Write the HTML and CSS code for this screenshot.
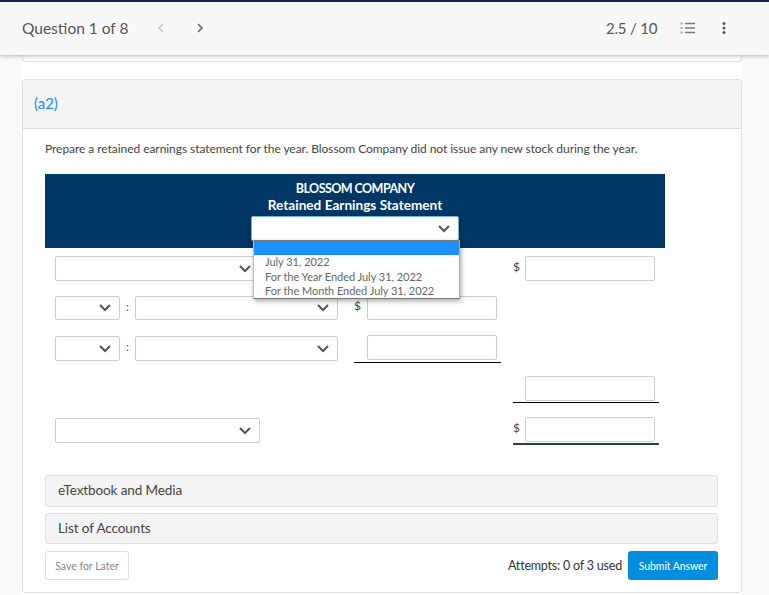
FILE: index.html
```html
<!DOCTYPE html>
<html lang="en">
<head>
<meta charset="utf-8">
<title>Question 1 of 8</title>
<link rel="stylesheet" href="styles.css">
</head>
<body>
<header class="topbar">
  <div class="topbar-left">
    <span class="q-title">Question 1 of 8</span>
    <svg class="nav-icon prev" width="8" height="10" viewBox="0 0 8 10"><path d="M6 1 2 5l4 4" fill="none" stroke="#c4c4c4" stroke-width="1.6"/></svg>
    <svg class="nav-icon next" width="8" height="10" viewBox="0 0 8 10"><path d="M2 1l4 4-4 4" fill="none" stroke="#666" stroke-width="1.6"/></svg>
  </div>
  <div class="topbar-right">
    <span class="score">2.5 / 10</span>
    <svg class="list-icon" width="15" height="12" viewBox="0 0 15 12"><path d="M5 1.5h10M5 6h10M5 10.5h10" stroke="#777" stroke-width="1.3"/><path d="M0.5 0.5h2v2h-2zM0.5 5h2v2h-2zM0.5 9.5h2v2h-2z" fill="#aaa"/></svg>
    <svg class="more-icon" width="4" height="12" viewBox="0 0 4 12"><circle cx="2" cy="1.5" r="1.5" fill="#555"/><circle cx="2" cy="6" r="1.5" fill="#555"/><circle cx="2" cy="10.5" r="1.5" fill="#555"/></svg>
  </div>
</header>
<main class="page">
  <div class="prev-panel"></div>
  <section class="panel">
    <div class="panel-head">(a2)</div>
    <div class="panel-body">
      <p class="prompt">Prepare a retained earnings statement for the year. Blossom Company did not issue any new stock during the year.</p>
      <div class="statement">
        <div class="banner">
          <div class="co">BLOSSOM COMPANY</div>
          <div class="st">Retained Earnings Statement</div>
          <div class="sel sel-date"><svg class="chev" width="12" height="8" viewBox="0 0 12 8"><path d="M1 1l5 5 5-5" fill="none" stroke="#555" stroke-width="2"/></svg></div>
          <ul class="menu">
            <li class="menu-blank"></li>
            <li>July 31, 2022</li>
            <li>For the Year Ended July 31, 2022</li>
            <li>For the Month Ended July 31, 2022</li>
          </ul>
        </div>
        <div class="row row-1">
          <div class="sel sel-wide"><svg class="chev" width="12" height="8" viewBox="0 0 12 8"><path d="M1 1l5 5 5-5" fill="none" stroke="#555" stroke-width="2"/></svg></div>
          <div class="cell-b"></div>
          <div class="cell-c"><span class="dollar">$</span><div class="inp"></div></div>
        </div>
        <div class="row row-2">
          <div class="cell-a">
            <div class="sel sel-small"><svg class="chev" width="12" height="8" viewBox="0 0 12 8"><path d="M1 1l5 5 5-5" fill="none" stroke="#555" stroke-width="2"/></svg></div>
            <span class="colon">:</span>
            <div class="sel sel-mid"><svg class="chev" width="12" height="8" viewBox="0 0 12 8"><path d="M1 1l5 5 5-5" fill="none" stroke="#555" stroke-width="2"/></svg></div>
          </div>
          <div class="cell-b"><span class="dollar">$</span><div class="inp"></div></div>
          <div class="cell-c"></div>
        </div>
        <div class="row row-3">
          <div class="cell-a">
            <div class="sel sel-small"><svg class="chev" width="12" height="8" viewBox="0 0 12 8"><path d="M1 1l5 5 5-5" fill="none" stroke="#555" stroke-width="2"/></svg></div>
            <span class="colon">:</span>
            <div class="sel sel-mid"><svg class="chev" width="12" height="8" viewBox="0 0 12 8"><path d="M1 1l5 5 5-5" fill="none" stroke="#555" stroke-width="2"/></svg></div>
          </div>
          <div class="cell-b line"><span class="dollar"></span><div class="inp"></div></div>
          <div class="cell-c"></div>
        </div>
        <div class="row row-4">
          <div class="cell-a"></div>
          <div class="cell-b"></div>
          <div class="cell-c line"><span class="dollar"></span><div class="inp"></div></div>
        </div>
        <div class="row row-5">
          <div class="sel sel-wide"><svg class="chev" width="12" height="8" viewBox="0 0 12 8"><path d="M1 1l5 5 5-5" fill="none" stroke="#555" stroke-width="2"/></svg></div>
          <div class="cell-b"></div>
          <div class="cell-c double"><span class="dollar">$</span><div class="inp"></div></div>
        </div>
      </div>
      <div class="accordion">eTextbook and Media</div>
      <div class="accordion second">List of Accounts</div>
      <div class="actions">
        <button class="save">Save for Later</button>
        <div class="submit-wrap">
          <span class="attempts">Attempts: 0 of 3 used</span>
          <button class="submit">Submit Answer</button>
        </div>
      </div>
    </div>
  </section>
</main>
</body>
</html>
```
FILE: styles.css
```css
* { box-sizing: border-box; }
html, body { margin: 0; padding: 0; height: 595px; overflow: hidden; }
body { background: #fafafa; font-family: Lato, "Open Sans", sans-serif; color: #444; }

.topbar {
  position: absolute; top: 0; left: 0; right: 0; height: 55px; z-index: 5;
  display: flex; align-items: center; justify-content: space-between;
  background: #f8f8f8; border-top: 2px solid #14204a;
  box-shadow: 0 1px 4px rgba(0,0,0,.3);
  padding: 0 43px 2px 22px;
}
.topbar-left, .topbar-right { display: flex; align-items: center; }
.q-title { font-size: 15.5px; color: #555; width: 135px; }
.nav-icon.next { margin-left: 31px; }
.score { font-size: 15px; letter-spacing: -.2px; color: #555; white-space: nowrap; width: 52px; }
.list-icon { margin-left: 22px; }
.more-icon { margin-left: 27px; }

.page { width: 720px; margin-left: 22px; background: #fff; height: 595px; padding-top: 55px; }
.prev-panel { height: 7px; border: 1px solid #e0e0e0; border-top: 0; border-radius: 0 0 3px 3px; }
.panel { margin-top: 17px; height: 514px; border: 1px solid #e0e0e0; border-radius: 3px; }
.panel-head { height: 49px; background: #f4f4f4; border-bottom: 1px solid #ddd; padding: 13px 11px; font-size: 15px; line-height: 20px; color: #1a8fe0; }
.panel-body { padding: 0 23px 0 22px; }
.prompt { margin: 0; padding-top: 12px; height: 45px; font-size: 12px; letter-spacing: -.055px; line-height: 16px; color: #444; white-space: nowrap; }

.statement { width: 620px; height: 301px; margin-bottom: 0; }
.banner { position: relative; height: 74px; background: #003764; color: #fff; text-align: center; padding-top: 6px; font-weight: 700; line-height: 17px; }
.co { font-size: 12.5px; letter-spacing: -.55px; }
.st { font-size: 13.6px; }
.sel-date { position: absolute; left: 206px; top: 42px; width: 208px; height: 25px; border-color: #6db3e8 !important; box-shadow: 0 2px 6px rgba(0,0,0,.3); }
.menu { position: absolute; left: 208px; top: 66px; width: 207px; height: 59px; margin: 0; padding: 0; list-style: none; background: #fff; z-index: 3; border-top: 1px solid #777; border-bottom: 1px solid #777; border-right: 1px solid #aaa; border-left: 1px solid #bbb; box-shadow: 1px 2px 5px rgba(0,0,0,.35); text-align: left; font-weight: 400; font-size: 11px; letter-spacing: -.04px; line-height: 14.6px; color: #666; white-space: nowrap; }
.menu li { padding-left: 11px; height: 14.6px; }
.menu .menu-blank { background: #1e90ff; height: 14px; }

.sel { display: flex; align-items: center; justify-content: flex-end; background: #fff; border: 1px solid #ccc; border-radius: 2px; height: 25px; padding-right: 8px; flex: none; }
.sel-wide { width: 205px; margin-left: 10px; }
.sel-small { width: 65px; }
.sel-mid { width: 203px; }
.colon { width: 15px; text-align: center; font-size: 12px; color: #555; line-height: 22px; }

.row { display: flex; height: 25px; }
.row-1 { margin-top: 8px; }
.row-2 { margin-top: 15px; height: 24px; }
.row-2 .sel, .row-2 .inp { height: 24px; }
.row-3 { margin-top: 16px; }
.row-3 .inp { margin-top: -1px; }
.row-4 { margin-top: 15px; }
.row-5 { margin-top: 17px; }
.cell-a { width: 299px; padding-left: 10px; display: flex; flex: none; }
.row-1 .cell-b, .row-5 .cell-b { width: 253px; flex: none; }
.cell-b { width: 147px; flex: none; display: flex; }
.row-2 .cell-a, .row-3 .cell-a, .row-4 .cell-a { width: 309px; }
.row-4 .cell-b { width: 159px; }
.row-2 .cell-b, .row-3 .cell-b { margin-right: 12px; }
.cell-c { width: 146px; flex: none; display: flex; }
.dollar { width: 13px; flex: none; font-size: 12px; color: #444; line-height: 20px; }
.cell-c .dollar { width: 12px; line-height: 22px; }
.inp { width: 130px; height: 25px; background: #fff; border: 1px solid #ccc; border-radius: 2px; }
.line { border-bottom: 1px solid #000; height: 27px; }
.double { border-bottom: 2px solid #2f3e4e; height: 28px; margin-top: -1px; }

.accordion { height: 32px; background: #f4f4f4; border: 1px solid #e0e0e0; border-radius: 3px; padding: 0 12px; font-size: 13.5px; letter-spacing: -.1px; line-height: 29px; color: #444; }
.second { margin-top: 6px; height: 31px; }
.actions { display: flex; justify-content: space-between; align-items: center; margin-top: 7px; }
.save { width: 84px; height: 29px; background: #fff; border: 1px solid #ddd; border-radius: 3px; font: 10.5px Lato, sans-serif; color: #888; padding: 0; }
.submit-wrap { display: flex; align-items: center; gap: 6px; }
.attempts { font-size: 12.5px; letter-spacing: -.2px; color: #333; }
.submit { width: 90px; height: 29px; background: #008ee0; border: 0; border-radius: 3px; color: #fff; font: 10.5px Lato, sans-serif; letter-spacing: -.1px; padding: 0; }
```
